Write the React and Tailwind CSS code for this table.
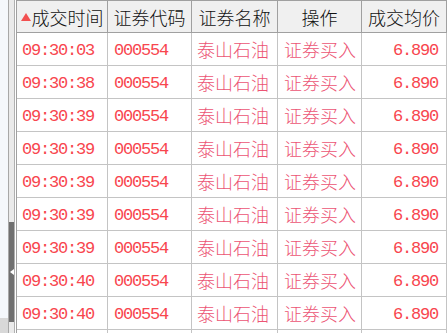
import React from "react";

const rows = [
  "09:30:03",
  "09:30:38",
  "09:30:39",
  "09:30:39",
  "09:30:39",
  "09:30:39",
  "09:30:39",
  "09:30:40",
  "09:30:40",
];

const cjk = { fontFamily: '"Noto Sans CJK SC", sans-serif' };
const mono = { fontFamily: '"Liberation Mono", monospace' };

function HeaderCell({ w, children }) {
  return (
    <div
      className={`${w} h-[32px] border-r border-b border-[#a0a0a0] bg-[#f0f0f0] flex items-center justify-center text-[18px] font-light text-[#111111] leading-none`}
      style={cjk}
    >
      {children}
    </div>
  );
}

const cell = "h-[33px] border-r border-b border-[#c4c4c4] flex items-center";
const num = "text-[17px] tracking-[-1.2px] text-[#f8464e] leading-none pt-[2px]";
const han = "text-[18px] font-light text-[#ec5474] leading-none";

export default function App() {
  return (
    <div className="w-[447px] h-[333px] overflow-hidden bg-white flex">
      <div className="w-[8px] h-full bg-[#f5f8fc] flex flex-col justify-end">
        <div className="h-[15px] bg-[#d8d8d8]" />
      </div>
      <div className="w-px h-full bg-[#a8a8a8]" />
      <div className="w-[5px] h-full bg-[#eaeaea] flex flex-col">
        <div className="h-[222px]" />
        <div className="h-[100px] bg-[#707070] flex items-center justify-center">
          <svg width="4" height="6" viewBox="0 0 4 6">
            <path d="M0 3 L4 0 L4 6 Z" fill="#ffffff" />
          </svg>
        </div>
      </div>
      <div className="w-px h-full bg-[#b0b0b0]" />
      <div className="w-px h-full bg-white" />
      <div className="flex-1 border-l border-t border-[#a0a0a0] flex flex-col">
        <div className="flex">
          <HeaderCell w="w-[91px]">
            <svg width="10" height="8" viewBox="0 0 10 8" className="mr-px">
              <path d="M5 0 L10 8 L0 8 Z" fill="#f25050" />
            </svg>
            <span>成交时间</span>
          </HeaderCell>
          <HeaderCell w="w-[84px]">证券代码</HeaderCell>
          <HeaderCell w="w-[86px]">证券名称</HeaderCell>
          <HeaderCell w="w-[84px]">操作</HeaderCell>
          <HeaderCell w="w-[85px]">成交均价</HeaderCell>
        </div>
        {rows.map((t, i) => (
          <div key={i} className="flex shrink-0 h-[33px]">
            <div className={`w-[91px] ${cell} pl-[5px] ${num}`} style={mono}>
              {t}
            </div>
            <div className={`w-[84px] ${cell} pl-[6px] ${num}`} style={mono}>
              000554
            </div>
            <div className={`w-[86px] ${cell} pl-[5px] ${han}`} style={cjk}>
              泰山石油
            </div>
            <div className={`w-[84px] ${cell} pl-[6px] ${han}`} style={cjk}>
              证券买入
            </div>
            <div
              className={`w-[85px] ${cell} justify-end pr-[8px] ${num}`}
              style={mono}
            >
              6.890
            </div>
          </div>
        ))}
        <div className="flex shrink-0 h-[33px]">
          <div className={`w-[91px] ${cell}`} />
          <div className={`w-[84px] ${cell}`} />
          <div className={`w-[86px] ${cell}`} />
          <div className={`w-[84px] ${cell}`} />
          <div className={`w-[85px] ${cell}`} />
        </div>
      </div>
    </div>
  );
}
